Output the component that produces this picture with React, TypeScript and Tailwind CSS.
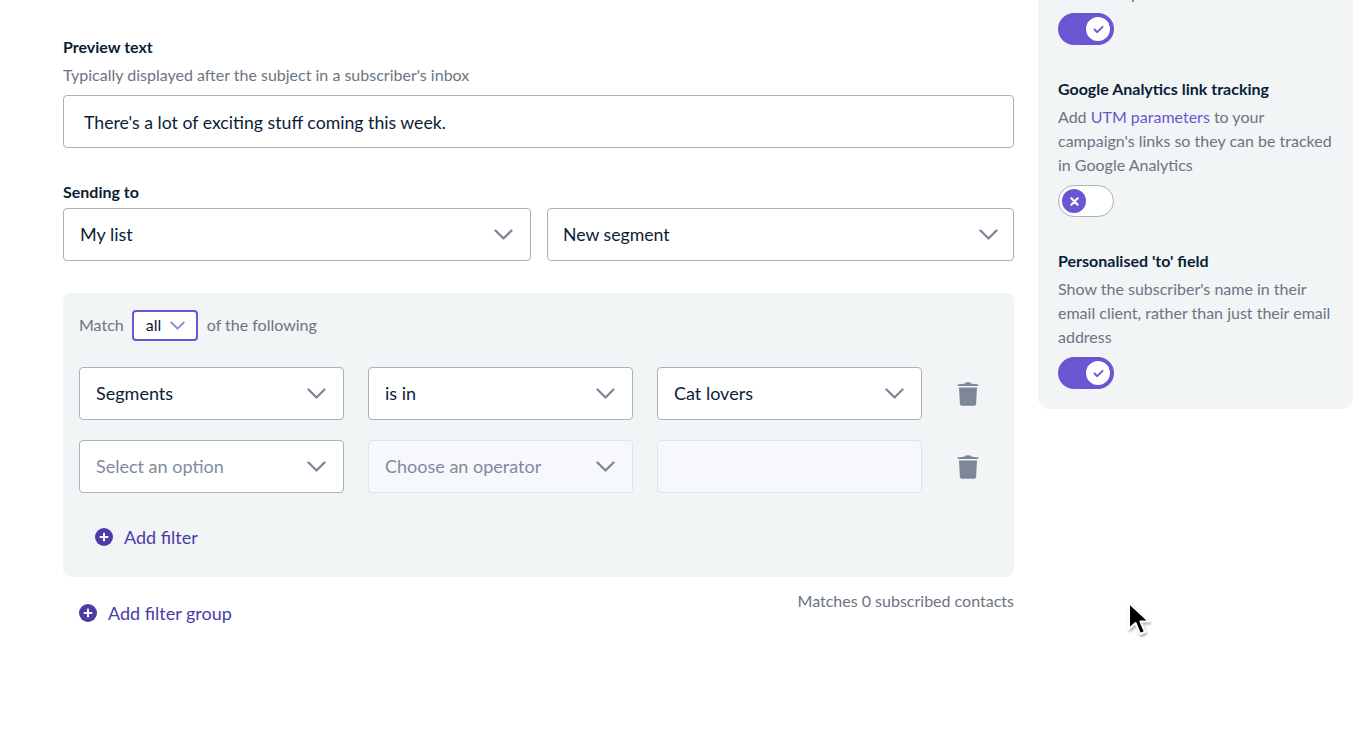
import { FC } from "react"

const Chevron: FC<{ className?: string }> = ({ className = "w-[19px] h-[11px] text-[#7d8797]" }) => (
  <svg viewBox="0 0 19 11" className={className} fill="none" stroke="currentColor" strokeWidth="2.300" strokeLinecap="round" strokeLinejoin="round">
    <path d="M1.5 1.5 9.500 9.500 17.500 1.500" />
  </svg>
)

const Trash = () => (
  <svg viewBox="0 0 22 24" className="w-[22px] h-[24px] text-[#7d8797]" fill="currentColor">
    <path d="M8 1.6C8.4.7 9.3.3 11 .3s2.600.4 3 1.300l6.700.9c.6.1.9.4.9.8s-.4.8-.9.800H1.300c-.5 0-.9-.4-.9-.8s.3-.7.9-.8L8 1.600Z" />
    <path d="M2 5.500h18l-.9 16.300c-.1 1.200-.8 1.900-2 1.900H4.900c-1.200 0-1.900-.7-2-1.900L2 5.500Z" />
  </svg>
)

const PlusIcon = () => (
  <svg viewBox="0 0 18 18" className="w-[18px] h-[18px] shrink-0">
    <circle cx="9" cy="9" r="9" fill="#4d3ba8" />
    <path d="M9 5.500v7M5.500 9h7" stroke="#fff" strokeWidth="2" strokeLinecap="round" />
  </svg>
)

type SelectProps = {
  label: string
  width?: string
  labelClass?: string
  muted?: boolean
  disabled?: boolean
}

const Select: FC<SelectProps> = ({ label, width = "w-[265px] pr-[17px]", labelClass = "text-[18px]", muted, disabled }) => (
  <div
    className={`${width} h-[53px] flex items-center justify-between pl-4 rounded-[4px] border ${
      disabled ? "bg-[#f6f8fc] border-[#dbe4f0]" : "bg-white border-[#a9b2bf]"
    }`}
  >
    <span className={`${labelClass} ${muted ? "text-[#7f8b9b]" : "text-[#0b1d36]"}`}>{label}</span>
    <Chevron />
  </div>
)

const Toggle: FC<{ on?: boolean }> = ({ on }) =>
  on ? (
    <div className="w-[56px] h-[32px] rounded-full bg-[#6b55d3] flex items-center justify-end pr-[4px]">
      <div className="w-[24px] h-[24px] rounded-full bg-white flex items-center justify-center">
        <svg viewBox="0 0 12 10" className="w-[11px] h-[9px]" fill="none" stroke="#6b55d3" strokeWidth="2" strokeLinecap="round" strokeLinejoin="round">
          <path d="M1.500 5 4.500 8 10.500 2" />
        </svg>
      </div>
    </div>
  ) : (
    <div className="w-[56px] h-[32px] rounded-full bg-white border border-[#a9b2bf] flex items-center pl-[3px]">
      <div className="w-[24px] h-[24px] rounded-full bg-[#6b55d3] flex items-center justify-center">
        <svg viewBox="0 0 10 10" className="w-[9px] h-[9px]" fill="none" stroke="#fff" strokeWidth="2.400" strokeLinecap="round">
          <path d="M1.500 1.500 8.500 8.500M8.500 1.500 1.500 8.500" />
        </svg>
      </div>
    </div>
  )

const Cursor = () => (
  <svg viewBox="0 0 24 38" className="absolute left-[1127px] top-[601px] w-[24px] h-[38px] drop-shadow-[1px_2px_1px_rgba(0,0,0,0.3)]">
    <path d="M2 2v26l6.500-6 4.500 11 5-2-4.500-10.500H22L2 2Z" fill="#000" stroke="#fff" strokeWidth="2" strokeLinejoin="round" />
  </svg>
)

export default function App() {
  return (
    <div className="relative w-[1362px] h-[740px] overflow-hidden bg-white flex items-start gap-6 pl-[63px] font-['Lato',sans-serif]">
      <div className="w-[951px] shrink-0 pt-[37px]">
        <div className="text-[16px] leading-5 font-bold text-[#0b1d36]">Preview text</div>
        <div className="mt-2 text-[16px] leading-5 text-[#6c7482]">Typically displayed after the subject in a subscriber's inbox</div>
        <div className="mt-[10px] h-[53px] flex items-center pl-5 pt-[3px] rounded-[4px] border border-[#a9b2bf] text-[17.7px] text-[#0b1d36]">
          There's a lot of exciting stuff coming this week.
        </div>

        <div className="mt-[34px] text-[16px] leading-5 font-bold text-[#0b1d36]">Sending to</div>
        <div className="mt-[6px] flex gap-4">
          <Select label="My list" width="w-[468px] pr-[17px]" />
          <Select label="New segment" width="w-[467px] pr-[15px]" labelClass="text-[17.7px] -ml-px mt-[1px]" />
        </div>

        <div className="mt-8 h-[284px] rounded-lg bg-[#f1f5f6] px-4 pt-[17px]">
          <div className="flex items-center h-[31px] text-[16px] text-[#6c7482]">
            <span className="mb-[2px]">Match</span>
            <div className="ml-2 w-[66px] h-[31px] flex items-center gap-[9px] pl-[12px] rounded-[4px] border-2 border-[#6b55d3] bg-white">
              <span className="mb-[2px] text-[#0b1d36]">all</span>
              <Chevron className="w-[15px] h-[9px] text-[#8f7fe0]" />
            </div>
            <span className="ml-[9px] mb-[2px]">of the following</span>
          </div>

          <div className="mt-[26px] flex flex-col gap-5">
            <div className="flex items-center gap-6">
              <Select label="Segments" />
              <Select label="is in" />
              <Select label="Cat lovers" />
              <div className="ml-[11px]">
                <Trash />
              </div>
            </div>
            <div className="flex items-center gap-6">
              <Select label="Select an option" muted />
              <Select label="Choose an operator" muted disabled />
              <div className="w-[265px] h-[53px] rounded-[4px] border border-[#dbe4f0] bg-[#f6f8fc]" />
              <div className="ml-[11px]">
                <Trash />
              </div>
            </div>
          </div>

          <div className="mt-[32px] ml-4 flex items-center gap-[11px] text-[18px] leading-6 text-[#4d3ba8]">
            <PlusIcon />
            <span>Add filter</span>
          </div>
        </div>

        <div className="flex justify-between items-start">
          <div className="mt-6 ml-4 flex items-center gap-[11px] text-[18px] leading-6 text-[#4d3ba8]">
            <PlusIcon />
            <span>Add filter group</span>
          </div>
          <div className="mt-[14px] text-[16px] leading-5 text-[#6c7482]">Matches 0 subscribed contacts</div>
        </div>
      </div>

      <div className="w-[315px] h-[409px] shrink-0 overflow-hidden rounded-b-xl bg-[#f1f5f6] px-5 pb-5 flex flex-col justify-end text-[16px] leading-6 text-[#6c7482]">
        <div className="shrink-0">See who opens</div>
        <div className="mt-2 shrink-0">
          <Toggle on />
        </div>
        <div className="mt-[32px] shrink-0 font-bold text-[#0b1d36]">Google Analytics link tracking</div>
        <div className="mt-1 shrink-0">
          Add <span className="text-[#6b55d3]">UTM parameters</span> to your campaign's links so they can be tracked in Google Analytics
        </div>
        <div className="mt-2 shrink-0">
          <Toggle />
        </div>
        <div className="mt-8 shrink-0 font-bold text-[#0b1d36]">Personalised 'to' field</div>
        <div className="mt-1 shrink-0">Show the subscriber's name in their email client, rather than just their email address</div>
        <div className="mt-2 shrink-0">
          <Toggle on />
        </div>
      </div>

      <Cursor />
    </div>
  )
}
